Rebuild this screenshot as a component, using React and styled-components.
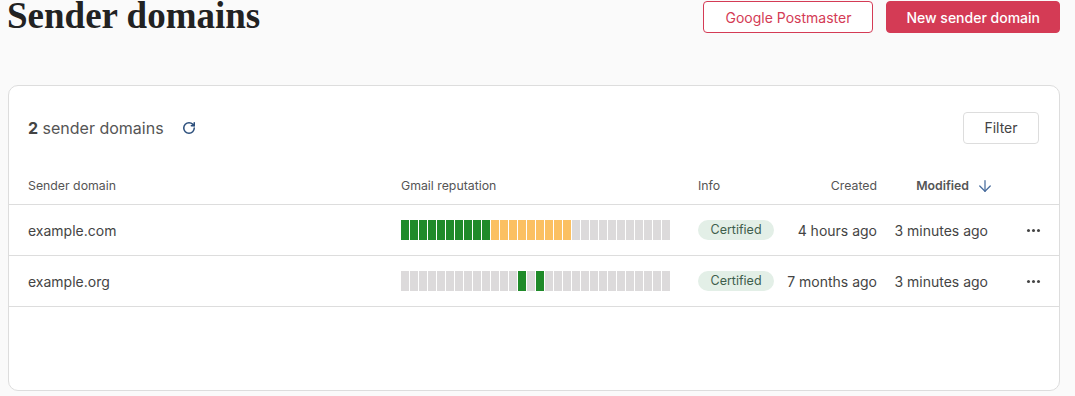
import React from 'react';
import styled, { createGlobalStyle } from 'styled-components';
import { RotateCw, ArrowDown } from 'lucide-react';

const GlobalStyle = createGlobalStyle`
  html, body {
    margin: 0;
    padding: 0;
    background: #fafafa;
  }
  body {
    font-family: Inter, "Noto Sans", sans-serif;
    color: #333333;
  }
`;

const Page = styled.div`
  width: 1060px;
  padding: 0 0 0 8px;
  box-sizing: border-box;
`;

const TopBar = styled.header`
  display: flex;
  align-items: flex-start;
  justify-content: space-between;
  height: 85px;
`;

const Title = styled.h1`
  margin: 0 0 0 -1px;
  font-family: "Liberation Serif", serif;
  font-weight: 700;
  font-size: 37px;
  line-height: 31px;
  color: #222222;
`;

const Actions = styled.div`
  display: flex;
  gap: 13px;
  padding-top: 1px;
`;

const Button = styled.button`
  height: 32px;
  padding: 0 ${(p) => (p.$primary ? '19px' : '21px')};
  border-radius: 4px;
  font-family: Inter, sans-serif;
  font-size: 14px;
  font-weight: ${(p) => (p.$primary ? 500 : 400)};
  border: 1px solid #d43b55;
  background: ${(p) => (p.$primary ? '#d43b55' : '#ffffff')};
  color: ${(p) => (p.$primary ? '#ffffff' : '#d43b55')};
  cursor: pointer;
`;

const Card = styled.section`
  background: #ffffff;
  border: 1px solid #dddddd;
  border-radius: 10px;
  height: 306px;
  box-sizing: border-box;
  overflow: hidden;
`;

const CardHeader = styled.div`
  display: flex;
  align-items: center;
  justify-content: space-between;
  box-sizing: border-box;
  padding: 26px 20px 0 19px;
  height: 57px;
`;

const Count = styled.div`
  display: flex;
  align-items: center;
  gap: 18px;
  font-size: 16px;
  color: #555555;

  b {
    font-weight: 700;
    color: #444444;
  }
`;

const RefreshIcon = styled(RotateCw)`
  color: #2c4f7c;
`;

const FilterButton = styled.button`
  height: 32px;
  width: 76px;
  border: 1px solid #dddddd;
  border-radius: 4px;
  background: #ffffff;
  font-family: Inter, sans-serif;
  font-size: 14px;
  color: #444444;
`;

const Row = styled.div`
  display: grid;
  grid-template-columns: 373px 297px 80px 99px 111px 1fr;
  align-items: center;
  box-sizing: border-box;
  padding-left: 19px;
  height: ${(p) => (p.$head ? '38px' : '51px')};
  border-bottom: 1px solid #dddddd;
  font-size: ${(p) => (p.$head ? '12.3px' : '14px')};
  color: ${(p) => (p.$head ? '#555555' : '#444444')};
  margin-top: ${(p) => (p.$head ? '24px' : '0')};
`;

const Cell = styled.div`
  font-weight: ${(p) => (p.$bold ? 600 : 400)};
  white-space: nowrap;
  display: flex;
  align-items: center;
  justify-content: ${(p) => (p.$right ? 'flex-end' : 'flex-start')};
  gap: 7px;
`;

const SortIcon = styled(ArrowDown)`
  color: #4a6e9e;
  margin-right: -6px;
`;

const Bars = styled.div`
  display: flex;
  gap: 1px;
`;

const Bar = styled.span`
  width: 8px;
  height: 20px;
  background: ${(p) => p.$color};
`;

const Badge = styled.span`
  display: inline-block;
  padding: 0 12.5px;
  height: 20px;
  line-height: 20px;
  border-radius: 10px;
  background: #e3efe7;
  color: #3e5e4c;
  font-size: 12.5px;
`;

const Dots = styled.div`
  justify-self: end;
  margin-right: 19px;
  display: flex;
  gap: 2px;

  span {
    width: 3px;
    height: 3px;
    border-radius: 50%;
    background: #444444;
  }
`;

const COLORS = { g: '#1f8a29', o: '#fbc061', n: '#dcdadb' };

const domains = [
  {
    name: 'example.com',
    bars: 'gggggggggg' + 'ooooooooo' + 'nnnnnnnnnnn',
    created: '4 hours ago',
    modified: '3 minutes ago',
  },
  {
    name: 'example.org',
    bars: 'nnnnnnnnnnnnn' + 'gng' + 'nnnnnnnnnnnnnn',
    created: '7 months ago',
    modified: '3 minutes ago',
  },
];

const App = () => (
  <>
    <GlobalStyle />
    <Page>
      <TopBar>
        <Title>Sender domains</Title>
        <Actions>
          <Button>Google Postmaster</Button>
          <Button $primary>New sender domain</Button>
        </Actions>
      </TopBar>
      <Card>
        <CardHeader>
          <Count>
            <span>
              <b>2</b> sender domains
            </span>
            <RefreshIcon size={14} strokeWidth={2.6} />
          </Count>
          <FilterButton>Filter</FilterButton>
        </CardHeader>
        <Row $head>
          <Cell>Sender domain</Cell>
          <Cell>Gmail reputation</Cell>
          <Cell>Info</Cell>
          <Cell $right>Created</Cell>
          <Cell $right $bold>
            Modified
            <SortIcon size={18} strokeWidth={1.7} />
          </Cell>
          <Cell />
        </Row>
        {domains.map((d) => (
          <Row key={d.name}>
            <Cell>{d.name}</Cell>
            <Cell>
              <Bars>
                {d.bars.split('').map((c, i) => (
                  <Bar key={i} $color={COLORS[c]} />
                ))}
              </Bars>
            </Cell>
            <Cell>
              <Badge>Certified</Badge>
            </Cell>
            <Cell $right>{d.created}</Cell>
            <Cell $right>{d.modified}</Cell>
            <Dots>
              <span />
              <span />
              <span />
            </Dots>
          </Row>
        ))}
      </Card>
    </Page>
  </>
);

export default App;
